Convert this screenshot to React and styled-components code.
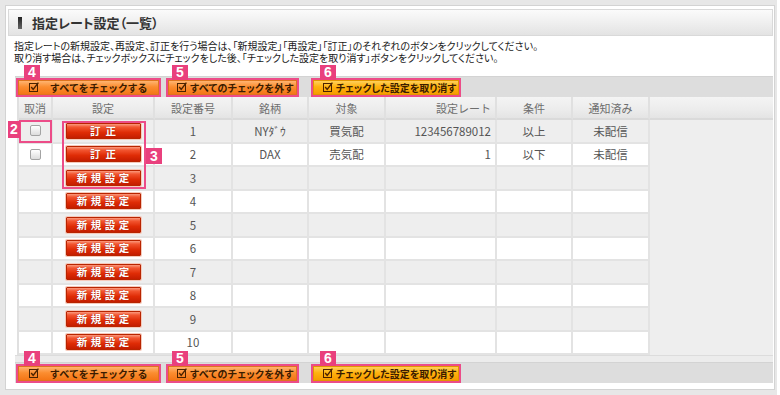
import React from 'react';
import styled, { createGlobalStyle } from 'styled-components';

const GlobalStyle = createGlobalStyle`
  html, body {
    margin: 0;
    padding: 0;
    background: #ffffff;
  }
  body {
    font-family: "Noto Sans CJK JP", "Noto Sans", sans-serif;
  }
`;

const JP = `"Noto Sans CJK JP", "Noto Sans", sans-serif`;

const Frame = styled.div`
  width: 777px;
  height: 395px;
  box-sizing: border-box;
  padding: 5px 2px 5px 5px;
  background: #e7e7e7;
`;

const Panel = styled.div`
  height: 100%;
  box-sizing: border-box;
  background: #fff;
  border: 1px solid #d3d3d3;
  padding: 3px 1px 0 2px;
  display: flex;
  flex-direction: column;
`;

const TitleBar = styled.div`
  height: 27px;
  box-sizing: border-box;
  border: 1px solid #d9d9d9;
  background: linear-gradient(#fbfbfb 0%, #eeeeee 55%, #e3e3e3 100%);
  display: flex;
  align-items: center;
  padding-left: 9px;
`;

const Marker = styled.span`
  width: 4px;
  height: 12px;
  background: linear-gradient(#222 0%, #666 100%);
`;

const Title = styled.h1`
  margin: 0 0 0 10px;
  font: bold 13px ${JP};
  font-feature-settings: "palt";
  color: #333;
`;

const Description = styled.p`
  margin: 4px 0 0 0;
  padding-left: 6px;
  font: 10px/12px ${JP};
  font-feature-settings: "palt";
  color: #1a1a1a;
`;

const Band = styled.div`
  margin: ${(p) => (p.$top ? '12px' : '0')} 0 0 7px;
  height: 21px;
  box-sizing: border-box;
  background: #dddddd;
  border-top: 1px solid #d3d3d3;
  display: flex;
  align-items: center;
  padding-left: 1px;
`;

const Outline = styled.div`
  position: relative;
  display: flex;
  border: 2px solid #ec4c88;
  margin-left: ${(p) => p.$gap || 0}px;
`;

const Badge = styled.span`
  position: absolute;
  z-index: 3;
  left: ${(p) => p.$left}px;
  top: ${(p) => p.$top}px;
  width: ${(p) => p.$w || 16}px;
  height: ${(p) => p.$h || 15}px;
  background: #e9407d;
  color: #fff;
  font: bold 14px/15px "Liberation Sans", Arial, sans-serif;
  display: flex;
  align-items: center;
  justify-content: center;
`;

const ActionButton = styled.button`
  width: ${(p) => p.$w}px;
  height: 15px;
  box-sizing: border-box;
  margin: 0;
  padding: 0 0 0 ${(p) => p.$pad}px;
  display: flex;
  align-items: center;
  border: 1px solid ${(p) => (p.$yellow ? '#e29500' : '#de741e')};
  background: ${(p) =>
    p.$yellow
      ? 'linear-gradient(#ffd05a 0%, #ffb20e 45%, #f79c00 100%)'
      : 'linear-gradient(#ffb470 0%, #fb8d30 45%, #f47616 100%)'};
  color: #3a1b00;
  font: bold 10px/13px ${JP};
  font-feature-settings: "palt";
  white-space: nowrap;
  cursor: pointer;
`;

const ButtonLabel = styled.span`
  flex: 1;
  text-align: center;
  letter-spacing: ${(p) => p.$spacing || 0}px;
`;

const CheckIcon = () => (
  <svg width="11" height="10" viewBox="0 0 11 10">
    <rect x="0.5" y="1.5" width="8" height="8" fill="none" stroke="#4a2200" strokeWidth="1" />
    <path d="M2.2 5 L4.2 7.4 L9.4 0.6" fill="none" stroke="#4a2200" strokeWidth="1.4" />
  </svg>
);

const Grid = styled.div`
  margin-left: 9px;
  display: grid;
  grid-template-columns: 34px 102px 78px 76px 77px 111px 76px 77px 1fr;
  grid-template-rows: 23px repeat(10, 23.5px);
  border-left: 2px solid #e0e0e0;
`;

const HeadCell = styled.div`
  box-sizing: border-box;
  display: flex;
  align-items: center;
  justify-content: ${(p) => p.$align || 'center'};
  padding: 0 4px;
  background: linear-gradient(#f4f4f4 0%, #ececec 60%, #e4e4e4 100%);
  border-right: ${(p) => (p.$last ? 'none' : '2px solid #e0e0e0')};
  border-bottom: 2px solid #dadada;
  font: 11px ${JP};
  color: #6e6e6e;
`;

const Cell = styled.div`
  position: relative;
  box-sizing: border-box;
  display: flex;
  align-items: center;
  justify-content: ${(p) => p.$align || 'center'};
  padding: 0 4px;
  background: ${(p) => (p.$alt ? '#eeeeee' : '#ffffff')};
  border-right: 2px solid #e3e3e3;
  border-bottom: 2px solid #e3e3e3;
  font: 11.5px ${JP};
  color: #555;
`;

const Filler = styled.div`
  grid-column: 9;
  grid-row: 2 / span 10;
  background: #eeeeee;
`;

const CheckBox = styled.input`
  appearance: none;
  margin: 0;
  width: 11px;
  height: 11px;
  border: 1px solid #a3a3a3;
  border-radius: 2px;
  background: linear-gradient(#ffffff, #dcdcdc);
`;

const SetButton = styled.button`
  width: 75px;
  height: 16px;
  box-sizing: border-box;
  margin: 0;
  padding: 0 0 0 ${(p) => p.$spacing}px;
  border: 1px solid #b82400;
  border-radius: 1px;
  box-shadow: 0 0 0 1px #f6c9bb;
  background: linear-gradient(#fb9a7e 0%, #f25530 22%, #df2c06 60%, #c41d00 100%);
  color: #fff;
  font: bold 10.5px/14px ${JP};
  letter-spacing: ${(p) => p.$spacing}px;
  text-shadow: 0 0 1px #8a1000;
  cursor: pointer;
`;

const HighlightBox = styled.span`
  position: absolute;
  z-index: 2;
  left: ${(p) => p.$left}px;
  top: ${(p) => p.$top}px;
  width: ${(p) => p.$w}px;
  height: ${(p) => p.$h}px;
  box-sizing: border-box;
  border: 2px solid #ec4c88;
  pointer-events: none;
`;

const Strip = styled.div`
  margin-left: 7px;
  height: 7px;
  box-sizing: border-box;
  background: #ececec;
  border-top: 1px solid #dcdcdc;
`;

const rows = [
  { no: 1, check: true, action: '訂正', name: 'NYﾀﾞｳ', side: '買気配', rate: '123456789012', cond: '以上', sent: '未配信' },
  { no: 2, check: true, action: '訂正', name: 'DAX', side: '売気配', rate: '1', cond: '以下', sent: '未配信' },
  ...[3, 4, 5, 6, 7, 8, 9, 10].map((n) => ({ no: n, action: '新規設定' })),
];

const ActionBar = ({ top }) => (
  <Band $top={top}>
    <Outline>
      <Badge $left={6} $top={-15}>4</Badge>
      <ActionButton $w={141} $pad={10}>
        <CheckIcon />
        <ButtonLabel $spacing={0.8}>すべてをチェックする</ButtonLabel>
      </ActionButton>
    </Outline>
    <Outline $gap={5}>
      <Badge $left={4} $top={-15}>5</Badge>
      <ActionButton $w={129} $pad={8}>
        <CheckIcon />
        <ButtonLabel $spacing={0.3}>すべてのチェックを外す</ButtonLabel>
      </ActionButton>
    </Outline>
    <Outline $gap={12}>
      <Badge $left={7} $top={-15}>6</Badge>
      <ActionButton $w={146} $pad={9} $yellow>
        <CheckIcon />
        <ButtonLabel>チェックした設定を取り消す</ButtonLabel>
      </ActionButton>
    </Outline>
  </Band>
);

const App = () => (
  <Frame>
    <GlobalStyle />
    <Panel>
      <TitleBar>
        <Marker />
        <Title>指定レート設定（一覧）</Title>
      </TitleBar>
      <Description>
        指定レートの新規設定、再設定、訂正を行う場合は、「新規設定」「再設定」「訂正」のそれぞれのボタンをクリックしてください。
        <br />
        取り消す場合は、チェックボックスにチェックをした後、「チェックした設定を取り消す」ボタンをクリックしてください。
      </Description>

      <ActionBar top />

      <Grid>
        <HeadCell>取消</HeadCell>
        <HeadCell>設定</HeadCell>
        <HeadCell>設定番号</HeadCell>
        <HeadCell>銘柄</HeadCell>
        <HeadCell>対象</HeadCell>
        <HeadCell $align="flex-end">設定レート</HeadCell>
        <HeadCell>条件</HeadCell>
        <HeadCell>通知済み</HeadCell>
        <HeadCell $last />
        <Filler />
        {rows.map((r, i) => {
          const alt = i % 2 === 0;
          return (
            <React.Fragment key={r.no}>
              <Cell $alt={alt}>
                {r.check && <CheckBox type="checkbox" />}
                {i === 0 && (
                  <>
                    <HighlightBox $left={0} $top={0} $w={33} $h={23} />
                    <Badge $left={-11} $top={1} $w={12} $h={17}>2</Badge>
                  </>
                )}
              </Cell>
              <Cell $alt={alt}>
                <SetButton $spacing={r.action === '訂正' ? 5 : 3.5}>{r.action}</SetButton>
                {i === 0 && (
                  <>
                    <HighlightBox $left={9} $top={1} $w={84} $h={68} />
                    <Badge $left={93} $top={28} $w={16} $h={16}>3</Badge>
                  </>
                )}
              </Cell>
              <Cell $alt={alt}>{r.no}</Cell>
              <Cell $alt={alt}>{r.name}</Cell>
              <Cell $alt={alt}>{r.side}</Cell>
              <Cell $alt={alt} $align="flex-end">{r.rate}</Cell>
              <Cell $alt={alt}>{r.cond}</Cell>
              <Cell $alt={alt}>{r.sent}</Cell>
            </React.Fragment>
          );
        })}
      </Grid>
      <Strip />
      <ActionBar />
    </Panel>
  </Frame>
);

export default App;
